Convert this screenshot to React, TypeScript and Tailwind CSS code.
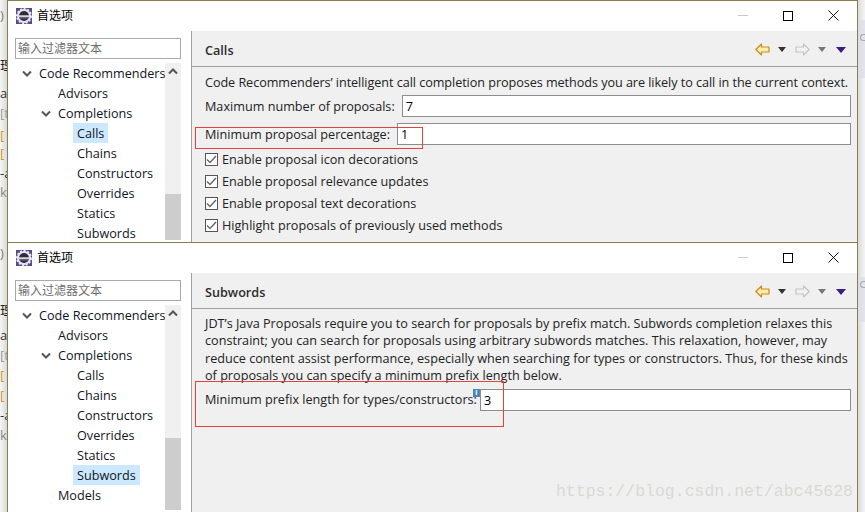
import { ReactNode } from 'react';

const FONT = "font-['Open_Sans','Noto_Sans_CJK_SC',sans-serif]";

function AppIcon() {
    return (
        <svg width="16" height="16" viewBox="0 0 16 16" className="shrink-0">
            <rect width="16" height="16" fill="#5b4a86" />
            <circle cx="8" cy="8" r="7" fill="#e4e2ea" />
            <circle cx="8" cy="8" r="7" fill="none" stroke="#e9e7ef" strokeWidth="2" strokeDasharray="2 1.6" />
            <circle cx="8" cy="8" r="5" fill="#2f2a40" />
            <rect x="3" y="7.4" width="10" height="1.4" fill="#ffffff" />
            <rect x="3" y="9.4" width="10" height="1" fill="#8d86a8" />
        </svg>
    );
}

function Chevron({ dir = 'down' }: { dir?: 'down' | 'up' }) {
    return (
        <svg width="10" height="7" viewBox="0 0 10 7">
            <path d={dir === 'down' ? 'M1 1.5 L5 5.5 L9 1.5' : 'M1 5.5 L5 1.5 L9 5.5'} fill="none" stroke="#555" strokeWidth="2" />
        </svg>
    );
}

function Arrow({ flip = false, active = false }: { flip?: boolean; active?: boolean }) {
    return (
        <svg width="15" height="13" viewBox="0 0 15 13" className={flip ? '-scale-x-100' : ''}>
            <path
                d="M0.8 6.5 L6.5 1 V4 H14 V9 H6.5 V12 Z"
                fill={active ? '#fdeeb0' : '#f2f2f2'}
                stroke={active ? '#cc8a1c' : '#c4c4c4'}
                strokeWidth="1.2"
                strokeLinejoin="round"
            />
        </svg>
    );
}

function Caret({ color, wide }: { color: string; wide?: boolean }) {
    return (
        <span
            className={wide ? 'w-0 h-0 border-x-[5.5px] border-x-transparent border-t-[6px]' : 'w-0 h-0 border-x-[4px] border-x-transparent border-t-[5px]'}
            style={{ borderTopColor: color }}
        />
    );
}

function TitleBar() {
    return (
        <div className="h-[30px] bg-white flex items-center pl-2 pr-px pb-px shrink-0">
            <AppIcon />
            <span className="ml-[5px] text-[12px] text-black">首选项</span>
            <div className="ml-auto flex items-center h-full">
                <div className="w-[46px] flex justify-center"><span className="w-[10px] h-px bg-[#c8c8c8]" /></div>
                <div className="w-[44px] flex justify-center"><span className="w-[10px] h-[10px] border border-black" /></div>
                <div className="w-[46px] flex justify-center">
                    <svg width="11" height="11" viewBox="0 0 11 11"><path d="M0.5 0.5 L10.5 10.5 M10.5 0.5 L0.5 10.5" stroke="#111" strokeWidth="1" /></svg>
                </div>
            </div>
        </div>
    );
}

function TreeRow({ label, level, open, selected }: { label: string; level: number; open?: boolean; selected?: boolean }) {
    const indent = level === 0 ? 'pl-[39px]' : level === 1 ? 'pl-[58px]' : 'pl-[77px]';
    return (
        <div className={`relative h-5 flex items-center whitespace-nowrap ${indent}`}>
            {open && (
                <span className={`absolute top-[7px] ${level === 0 ? 'left-[22px]' : 'left-[41px]'}`}><Chevron /></span>
            )}
            <span className={selected ? 'bg-[#cce8ff] px-[4px] -mx-[4px] leading-5' : ''}>{label}</span>
        </div>
    );
}

function Sidebar({ rows, thumb }: { rows: ReactNode; thumb: string }) {
    return (
        <div className="w-[183px] bg-white shrink-0 flex flex-col overflow-hidden">
            <div className="h-[21px] mt-[7px] ml-[7px] mr-[10px] border border-[#a9a9a9] px-[2px] text-[12px] leading-[19px] text-[#6d6d6d] shrink-0">输入过滤器文本</div>
            <div className="flex flex-1 mt-[4px] mb-[2px] min-h-0">
                <div className="flex-1 min-w-0 text-[12.65px] text-[#10151f] -ml-[8px] overflow-hidden">{rows}</div>
                <div className="w-[16px] mr-[10px] bg-[#f0f0f0] shrink-0 flex flex-col">
                    <div className="h-[17px] flex items-center justify-center shrink-0"><Chevron dir="up" /></div>
                    <div className="flex-1" />
                    <div className={`bg-[#cdcdcd] shrink-0 ${thumb}`} />
                </div>
            </div>
        </div>
    );
}

function PanelHeader({ title }: { title: string }) {
    return (
        <div className="h-[35px] bg-[#f0f0f0] border-b border-[#a0a0a0] flex items-center pl-[13px] pr-[11px] shrink-0 mt-[1px]">
            <span className="text-[12.65px] font-semibold text-[#2d2d2d] mt-[2px]">{title}</span>
            <div className="ml-auto flex items-center mt-[1px]">
                <Arrow active />
                <span className="ml-[8px] flex"><Caret color="#333" /></span>
                <span className="ml-[9px] flex"><Arrow flip /></span>
                <span className="ml-[8px] flex"><Caret color="#777" /></span>
                <span className="ml-[10px] flex"><Caret color="#3b1d80" wide /></span>
            </div>
        </div>
    );
}

function Field({ label, value, hint, rowClass, gap }: { label: string; value: string; hint?: boolean; rowClass: string; gap: string }) {
    return (
        <div className={`flex items-center ${rowClass}`}>
            <span className="whitespace-nowrap">{label}</span>
            <div className={`relative flex-1 h-[22px] bg-white border border-[#8d8d8d] px-[3px] leading-5 text-black ${gap}`}>
                {value}
                {hint && <span className="absolute -left-[8px] -top-px w-[7px] h-[8px] bg-[#4a86b8] text-white text-[7px] leading-[8px] text-center font-bold">i</span>}
            </div>
        </div>
    );
}

function Check({ label }: { label: string }) {
    return (
        <div className="flex items-center h-[22px] whitespace-nowrap">
            <span className="w-[13px] h-[13px] border border-[#555] bg-white flex items-center justify-center shrink-0 mr-[4px]">
                <svg width="11" height="9" viewBox="0 0 11 9"><path d="M1 4.5 L4 7.5 L10 1" fill="none" stroke="#666" strokeWidth="1.4" /></svg>
            </span>
            {label}
        </div>
    );
}

function LeftEdge() {
    return (
        <div className="w-[7px] shrink-0 bg-linear-to-r from-[#f6f6f6] to-[#d9d9d9] flex flex-col overflow-hidden whitespace-nowrap text-[13px]">
            <div className="h-4 leading-4 mt-[7px] text-[#777]">)</div>
            <div className="h-4 leading-4 mt-[34px] text-[#222]">理</div>
            <div className="h-4 leading-4 mt-[12px] text-[#333]">a</div>
            <div className="h-4 leading-4 mt-[4px] text-[#999]">[t</div>
            <div className="h-4 leading-4 mt-[6px] text-[#c9962b]">[</div>
            <div className="h-4 leading-4 mt-[2px] text-[#c9962b]">[</div>
            <div className="h-4 leading-4 mt-[4px] text-[#333]">-a</div>
            <div className="h-4 leading-4 mt-[3px] text-[#888]">k</div>
            <div className="h-4 leading-4 mt-[45px] text-[#777]">)</div>
            <div className="h-4 leading-4 mt-[41px] text-[#222]">理</div>
            <div className="h-4 leading-4 mt-[9px] text-[#333]">a</div>
            <div className="h-4 leading-4 mt-[4px] text-[#999]">[t</div>
            <div className="h-4 leading-4 mt-[4px] text-[#c9962b]">[</div>
            <div className="h-4 leading-4 mt-[4px] text-[#c9962b]">[</div>
            <div className="h-4 leading-4 mt-[4px] text-[#333]">-a</div>
            <div className="h-4 leading-4 mt-[4px] text-[#888]">k</div>
        </div>
    );
}

function RightEdge() {
    return (
        <div className="w-[7px] shrink-0 bg-linear-to-r from-[#dcdcdc] to-[#f4f4f4] flex flex-col">
            <div className="h-[58px] mt-[20px] bg-[#dcdde8]/70 pt-[14px] pl-[2px]"><span className="block w-[5px] h-[7px] rounded-l-sm border border-r-0 border-[#a8a8a8]" /></div>
            <div className="h-[45px] mt-[199px] bg-[#dcdde8]/70 pt-[4px] pl-[2px]"><span className="block w-[5px] h-[7px] rounded-l-sm border border-r-0 border-[#a8a8a8]" /></div>
        </div>
    );
}

export default function App() {
    const firstRows = (
        <>
            <TreeRow label="Code Recommenders" level={0} open />
            <TreeRow label="Advisors" level={1} />
            <TreeRow label="Completions" level={1} open />
            <TreeRow label="Calls" level={2} selected />
            <TreeRow label="Chains" level={2} />
            <TreeRow label="Constructors" level={2} />
            <TreeRow label="Overrides" level={2} />
            <TreeRow label="Statics" level={2} />
            <TreeRow label="Subwords" level={2} />
        </>
    );
    const secondRows = (
        <>
            <TreeRow label="Code Recommenders" level={0} open />
            <TreeRow label="Advisors" level={1} />
            <TreeRow label="Completions" level={1} open />
            <TreeRow label="Calls" level={2} />
            <TreeRow label="Chains" level={2} />
            <TreeRow label="Constructors" level={2} />
            <TreeRow label="Overrides" level={2} />
            <TreeRow label="Statics" level={2} />
            <TreeRow label="Subwords" level={2} selected />
            <TreeRow label="Models" level={1} />
        </>
    );

    return (
        <div className={`relative w-[865px] h-[512px] overflow-hidden flex bg-white ${FONT}`}>
            <LeftEdge />
            <div className="w-[851px] shrink-0 flex flex-col">
                {/* first window */}
                <section className="relative h-[242px] border-t border-x border-[#8a7d50] flex flex-col overflow-hidden shrink-0">
                    <TitleBar />
                    <div className="flex flex-1 min-h-0">
                        <Sidebar rows={firstRows} thumb="h-[46px]" />
                        <div className="flex-1 border-l border-[#a0a0a0] bg-[#f0f0f0] flex flex-col text-[12.65px] text-[#222] min-w-0">
                            <PanelHeader title="Calls" />
                            <div className="pl-[13px] pr-[6px] pt-[5px]">
                                <div className="h-[20px] leading-5 whitespace-nowrap tracking-[-0.06px]">Code Recommenders’ intelligent call completion proposes methods you are likely to call in the current context.</div>
                                <Field label="Maximum number of proposals:" value="7" rowClass="mt-[3px]" gap="ml-[7px]" />
                                <Field label="Minimum proposal percentage:" value="1" rowClass="mt-[6px]" gap="ml-[7px]" />
                                <div className="mt-[3px]">
                                    <Check label="Enable proposal icon decorations" />
                                    <Check label="Enable proposal relevance updates" />
                                    <Check label="Enable proposal text decorations" />
                                    <Check label="Highlight proposals of previously used methods" />
                                </div>
                            </div>
                        </div>
                    </div>
                    <div className="absolute left-[187px] top-[126px] w-[228px] h-[22px] border border-[#e8403a]" />
                </section>
                {/* second window */}
                <section className="relative h-[270px] border-t border-x border-[#8a7d50] flex flex-col overflow-hidden shrink-0">
                    <TitleBar />
                    <div className="flex flex-1 min-h-0">
                        <Sidebar rows={secondRows} thumb="h-[72px]" />
                        <div className="flex-1 border-l border-[#a0a0a0] bg-[#f0f0f0] flex flex-col text-[12.65px] text-[#222] min-w-0">
                            <PanelHeader title="Subwords" />
                            <div className="pl-[13px] pr-[6px] pt-[6px]">
                                <p className="leading-[17.4px] whitespace-nowrap">
                                    JDT’s Java Proposals require you to search for proposals by prefix match. Subwords completion relaxes this<br />
                                    constraint; you can search for proposals using arbitrary subwords matches. This relaxation, however, may<br />
                                    reduce content assist performance, especially when searching for types or constructors. Thus, for these kinds<br />
                                    of proposals you can specify a minimum prefix length below.
                                </p>
                                <Field label="Minimum prefix length for types/constructors:" value="3" hint rowClass="mt-[4px]" gap="ml-[3px]" />
                            </div>
                        </div>
                    </div>
                    <div className="absolute left-[187px] top-[138px] w-[309px] h-[46px] border border-[#e8403a]" />
                </section>
            </div>
            <RightEdge />
            <div className="absolute right-[12px] bottom-[10px] font-['Liberation_Mono',monospace] text-[16.5px] leading-5 text-[#d9d9d4]">https://blog.csdn.net/abc45628</div>
        </div>
    );
}
